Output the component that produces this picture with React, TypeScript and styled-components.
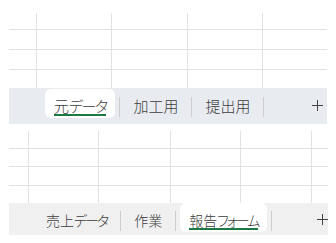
import * as React from "react";
import styled, { createGlobalStyle } from "styled-components";

const GlobalStyle = createGlobalStyle`
	html, body {
		margin: 0;
		padding: 0;
		background: #ffffff;
	}
	body {
		font-family: "Noto Sans CJK JP", "Noto Sans", sans-serif;
	}
`;

const Page = styled.div`
	display: flex;
	flex-direction: column;
	width: 336px;
	height: 243px;
	padding-left: 9px;
	box-sizing: border-box;
	overflow: hidden;
`;

const Sheet = styled.div<{ $top: number; $width: number }>`
	display: flex;
	flex-direction: column;
	width: ${({ $width }) => $width}px;
	padding-top: ${({ $top }) => $top}px;
`;

const Grid = styled.div<{ $cols: string; $rows: string }>`
	display: grid;
	grid-template-columns: ${({ $cols }) => $cols};
	grid-template-rows: ${({ $rows }) => $rows};
`;

const Cell = styled.div<{ $lastCol: boolean; $lastRow: boolean }>`
	box-sizing: border-box;
	border-right: ${({ $lastCol }) => ($lastCol ? "none" : "1px solid #e1e1e1")};
	border-bottom: ${({ $lastRow }) => ($lastRow ? "none" : "1px solid #e1e1e1")};
`;

const TabBar = styled.div<{
	$bg: string;
	$height: number;
	$padTop: number;
	$padLeft: number;
	$padRight: number;
}>`
	display: flex;
	align-items: flex-start;
	box-sizing: border-box;
	height: ${({ $height }) => $height}px;
	padding: ${({ $padTop, $padRight, $padLeft }) =>
		`${$padTop}px ${$padRight}px 0 ${$padLeft}px`};
	background: ${({ $bg }) => $bg};
`;

const Tab = styled.div<{ $active: boolean }>`
	display: flex;
	box-sizing: border-box;
	height: 29px;
	margin: 0 4px;
	padding: 9px 9px 2px;
	border-radius: 6px;
	background: ${({ $active }) => ($active ? "#ffffff" : "transparent")};
`;

const TabLabel = styled.span<{ $active: boolean; $size: number }>`
	font-size: ${({ $size }) => $size}px;
	font-weight: 300;
	line-height: 16px;
	font-feature-settings: "palt" 1;
	color: #3c3c3c;
	white-space: nowrap;
	border-bottom: 2px solid
		${({ $active }) => ($active ? "#1b7a43" : "transparent")};
`;

// katakana in the original UI font is set much narrower than in Noto
const Kana = styled.span<{ $spacing: number }>`
	letter-spacing: ${({ $spacing }) => $spacing}px;
`;

const Separator = styled.div`
	width: 1px;
	height: 20px;
	margin-top: 8px;
	background: #cdcdcd;
`;

const PlusButton = styled.div`
	display: flex;
	justify-content: center;
	box-sizing: border-box;
	width: 12px;
	height: 29px;
	margin-left: auto;
	padding-top: 11px;
	color: #444444;
`;

const PlusIcon = () => (
	<svg width="11" height="11" viewBox="0 0 11 11" fill="none">
		<path d="M5.5 0V11M0 5.5H11" stroke="currentColor" strokeWidth="1" />
	</svg>
);

const splitKana = (text: string) =>
	text.split(/([\u30A0-\u30FF]+)/).filter(Boolean);

type SheetProps = {
	top: number;
	width: number;
	cols: number[];
	rows: number[];
	tabs: string[];
	active: number;
	fontSize: number;
	kanaSpacing: number;
	bar: { bg: string; height: number; padTop: number; padLeft: number; padRight: number };
};

const SheetView = ({
	top,
	width,
	cols,
	rows,
	tabs,
	active,
	fontSize,
	kanaSpacing,
	bar,
}: SheetProps) => (
	<Sheet $top={top} $width={width}>
		<Grid
			$cols={cols.map((c) => `${c}px`).join(" ") + " 1fr"}
			$rows={rows.map((r) => `${r}px`).join(" ")}
		>
			{rows.map((_, r) =>
				[...cols, 0].map((_, c) => (
					<Cell
						key={`${r}-${c}`}
						$lastCol={c === cols.length}
						$lastRow={r === rows.length - 1}
					/>
				))
			)}
		</Grid>
		<TabBar
			$bg={bar.bg}
			$height={bar.height}
			$padTop={bar.padTop}
			$padLeft={bar.padLeft}
			$padRight={bar.padRight}
		>
			{tabs.map((t, i) => (
				<React.Fragment key={t}>
					<Tab $active={i === active}>
						<TabLabel $active={i === active} $size={fontSize}>
							{splitKana(t).map((part, j) =>
								/[\u30A0-\u30FF]/.test(part) ? (
									<Kana key={j} $spacing={kanaSpacing}>
										{part}
									</Kana>
								) : (
									part
								)
							)}
						</TabLabel>
					</Tab>
					<Separator />
				</React.Fragment>
			))}
			<PlusButton>
				<PlusIcon />
			</PlusButton>
		</TabBar>
	</Sheet>
);

const App = () => {
	return (
		<>
			<GlobalStyle />
			<Page>
				<SheetView
					top={13}
					width={318}
					cols={[28, 75, 76, 75]}
					rows={[17, 20, 20, 18]}
					tabs={["元データ", "加工用", "提出用"]}
					active={0}
					fontSize={15}
					kanaSpacing={-1.5}
					bar={{ bg: "#e8ebf0", height: 36, padTop: 1, padLeft: 32, padRight: 4 }}
				/>
				<SheetView
					top={7}
					width={319}
					cols={[20, 70, 72, 70, 71]}
					rows={[18, 18, 19, 17]}
					tabs={["売上データ", "作業", "報告フォーム"]}
					active={2}
					fontSize={14}
					kanaSpacing={-2}
					bar={{ bg: "#f0f0f0", height: 32, padTop: 0, padLeft: 24, padRight: 0 }}
				/>
			</Page>
		</>
	);
};

export default App;
